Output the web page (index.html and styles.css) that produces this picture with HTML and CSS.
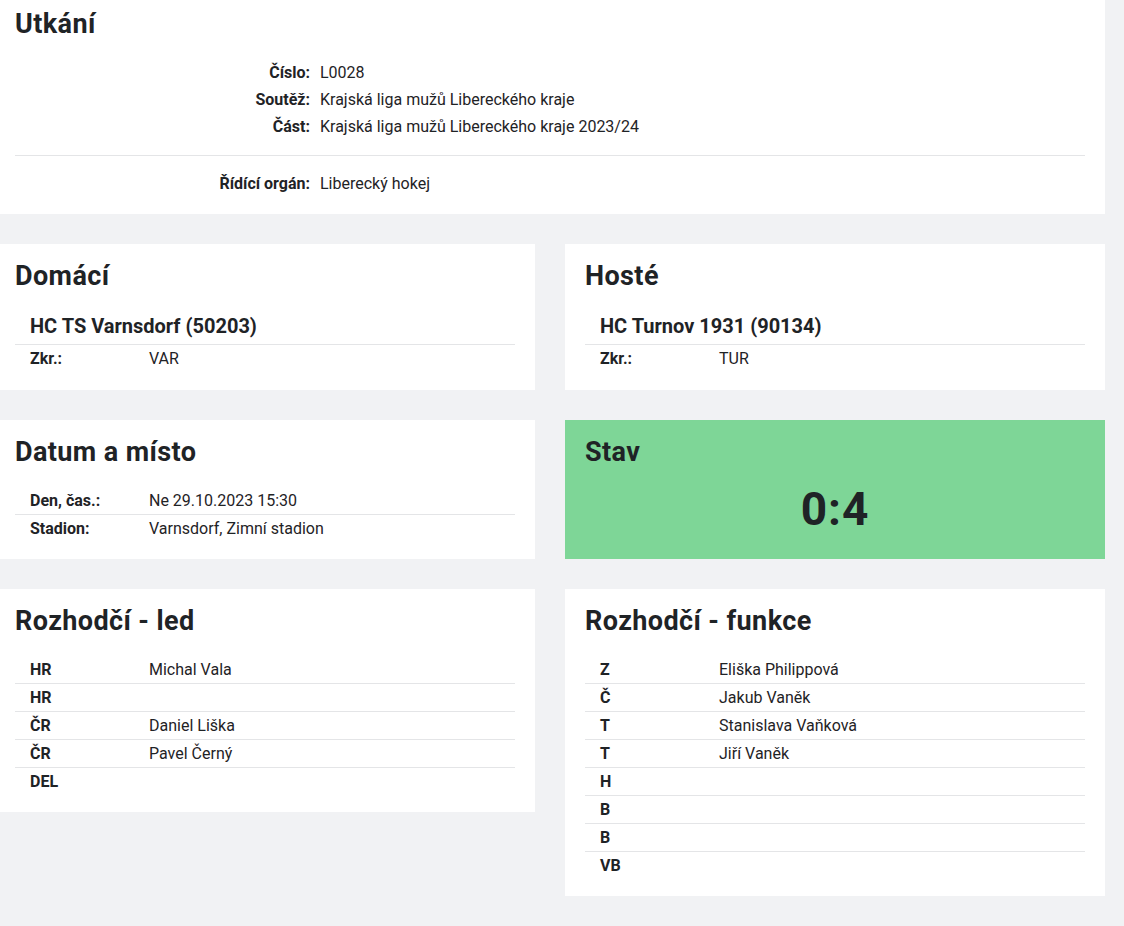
FILE: index.html
```html
<!DOCTYPE html>
<html lang="cs">
<head>
<meta charset="utf-8">
<title>Utkání</title>
<link rel="stylesheet" href="styles.css">
</head>
<body>
<main class="page">
  <section class="card card-wide card-top">
    <h2 class="card-title">Utkání</h2>
    <dl class="info">
      <dt>Číslo:</dt><dd>L0028</dd>
      <dt>Soutěž:</dt><dd>Krajská liga mužů Libereckého kraje</dd>
      <dt>Část:</dt><dd>Krajská liga mužů Libereckého kraje 2023/24</dd>
    </dl>
    <hr class="sep">
    <dl class="info">
      <dt>Řídící orgán:</dt><dd>Liberecký hokej</dd>
    </dl>
  </section>

  <section class="card card-left card-team">
    <h2 class="card-title">Domácí</h2>
    <h3 class="team">HC TS Varnsdorf (50203)</h3>
    <div class="table">
      <div class="row"><span class="k">Zkr.:</span><span class="v">VAR</span></div>
    </div>
  </section>

  <section class="card card-right card-team">
    <h2 class="card-title">Hosté</h2>
    <h3 class="team">HC Turnov 1931 (90134)</h3>
    <div class="table">
      <div class="row"><span class="k">Zkr.:</span><span class="v">TUR</span></div>
    </div>
  </section>

  <section class="card card-left card-date">
    <h2 class="card-title">Datum a místo</h2>
    <div class="table">
      <div class="row"><span class="k">Den, čas.:</span><span class="v">Ne 29.10.2023 15:30</span></div>
      <div class="row"><span class="k">Stadion:</span><span class="v">Varnsdorf, Zimní stadion</span></div>
    </div>
  </section>

  <section class="card card-right card-score">
    <h2 class="card-title">Stav</h2>
    <div class="score">0:4</div>
  </section>

  <section class="card card-left">
    <h2 class="card-title">Rozhodčí - led</h2>
    <div class="table">
      <div class="row"><span class="k">HR</span><span class="v">Michal Vala</span></div>
      <div class="row"><span class="k">HR</span><span class="v"></span></div>
      <div class="row"><span class="k">ČR</span><span class="v">Daniel Liška</span></div>
      <div class="row"><span class="k">ČR</span><span class="v">Pavel Černý</span></div>
      <div class="row"><span class="k">DEL</span><span class="v"></span></div>
    </div>
  </section>

  <section class="card card-right">
    <h2 class="card-title">Rozhodčí - funkce</h2>
    <div class="table">
      <div class="row"><span class="k">Z</span><span class="v">Eliška Philippová</span></div>
      <div class="row"><span class="k">Č</span><span class="v">Jakub Vaněk</span></div>
      <div class="row"><span class="k">T</span><span class="v">Stanislava Vaňková</span></div>
      <div class="row"><span class="k">T</span><span class="v">Jiří Vaněk</span></div>
      <div class="row"><span class="k">H</span><span class="v"></span></div>
      <div class="row"><span class="k">B</span><span class="v"></span></div>
      <div class="row"><span class="k">B</span><span class="v"></span></div>
      <div class="row"><span class="k">VB</span><span class="v"></span></div>
    </div>
  </section>
</main>
</body>
</html>
```

FILE: styles.css
```css
html, body {
  margin: 0;
  padding: 0;
}
body {
  background: #f1f2f4;
  color: #1f2326;
  font-family: Roboto, "Liberation Sans", Arial, sans-serif;
  font-size: 16px;
  min-height: 926px;
}
.page {
  width: 1105px;
  display: grid;
  grid-template-columns: 535px 540px;
  column-gap: 30px;
  row-gap: 30px;
  align-items: start;
  padding-bottom: 30px;
}
.card {
  background: #ffffff;
  padding: 17px 20px 17px 15px;
  box-sizing: border-box;
}
.card-wide {
  grid-column: 1 / span 2;
}
.card-top {
  padding-top: 9px;
  padding-bottom: 17px;
}
.card-right {
  padding-left: 20px;
}
.card-team {
  padding-bottom: 18px;
}
.card-date {
  padding-bottom: 17px;
}
.card-title {
  margin: 0 0 20px;
  font-size: 27px;
  line-height: 30px;
  font-weight: 700;
  letter-spacing: 0.4px;
}
.info {
  display: grid;
  grid-template-columns: 295px 1fr;
  column-gap: 10px;
  margin: 0;
}
.info dt {
  text-align: right;
  font-weight: 700;
  line-height: 27px;
}
.info dd {
  margin: 0;
  line-height: 27px;
}
.sep {
  border: 0;
  border-top: 1px solid #e4e5e7;
  margin: 15px 0 14px;
}
.team {
  margin: 0 0 3px;
  padding-left: 15px;
  font-size: 20px;
  line-height: 30px;
  font-weight: 700;
}
.table {
  display: flex;
  flex-direction: column;
}
.row {
  display: flex;
  height: 27px;
  align-items: center;
  padding-left: 15px;
  border-top: 1px solid #e4e5e7;
}
.row:first-child {
  border-top: 0;
}
.team + .table .row:first-child {
  border-top: 1px solid #e4e5e7;
}
.k {
  width: 119px;
  font-weight: 700;
  flex: none;
}
.v {
  flex: 1;
}
.card-score {
  background: #7ed697;
  padding-bottom: 24px;
}
.card-score .card-title {
  margin-bottom: 16px;
}
.score {
  text-align: center;
  font-size: 46px;
  line-height: 52px;
  font-weight: 700;
  letter-spacing: 1px;
}
```
